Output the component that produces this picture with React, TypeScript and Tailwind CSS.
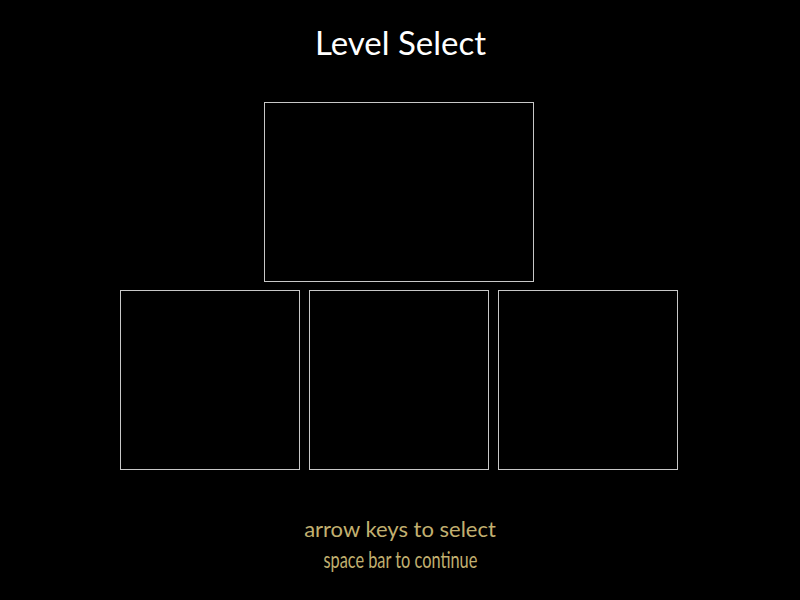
export default function App() {
  return (
    <div className="w-[800px] h-[600px] bg-black flex flex-col items-center font-['Lato',sans-serif] overflow-hidden">
      {/* Title */}
      <h1 className="mt-[20px] h-[44px] text-[33px] leading-[44px] text-white pl-[1px]">Level Select</h1>

      {/* Level slots */}
      <div className="mt-[38px] flex flex-col items-center gap-[8px] pr-[3px]">
        <div className="w-[270px] h-[180px] border border-[#c8c8c8]" />
        <div className="flex gap-[9px]">
          <div className="w-[180px] h-[180px] border border-[#c8c8c8]" />
          <div className="w-[180px] h-[180px] border border-[#c8c8c8]" />
          <div className="w-[180px] h-[180px] border border-[#c8c8c8]" />
        </div>
      </div>

      {/* Hints */}
      <p className="mt-[46px] text-[22px] leading-[26px] text-[#c2b070]">arrow keys to select</p>
      <p className="mt-[4px] text-[23px] leading-[26px] text-[#c2b070] scale-x-[0.71]">space bar to continue</p>
    </div>
  );
}
